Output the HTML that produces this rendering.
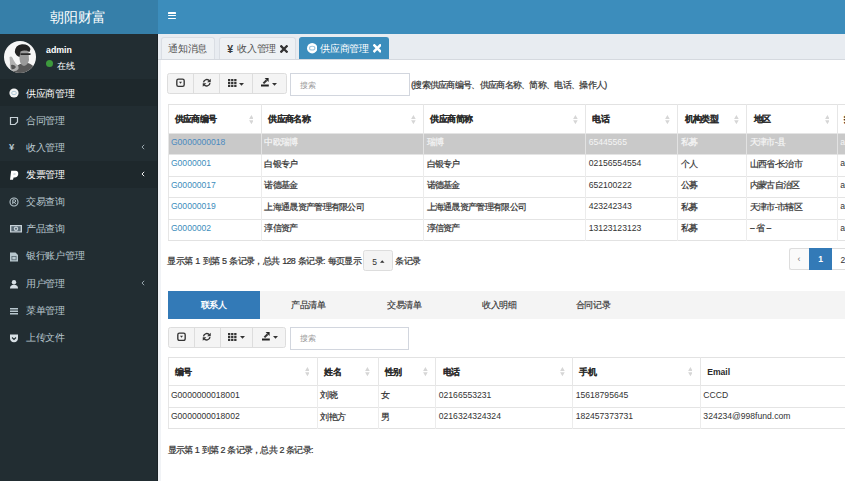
<!DOCTYPE html>
<html><head><meta charset="utf-8">
<style>
*{box-sizing:border-box;margin:0;padding:0}
html,body{width:845px;height:481px;overflow:hidden;background:#fff;font-family:"Liberation Sans",sans-serif;color:#333}
.a{position:absolute}
.t{position:absolute;white-space:nowrap;line-height:1}
#logo{left:0;top:0;width:158px;height:34px;background:#367fa9}
#nav{left:158px;top:0;width:687px;height:34px;background:#3c8dbc}
#side{left:0;top:34px;width:157.5px;height:447px;background:#222d32;border-right:1px solid #1a2226}
.mi{position:absolute;left:0;width:156.5px;height:27.1px}
.mi .tx{position:absolute;left:26px;top:9.6px;font-size:10px;letter-spacing:-.3px;line-height:1;color:#b8c7ce;white-space:nowrap}
.mi.on{background:#1e282c}
.mi.on .tx{color:#fff}
.mi .ic{position:absolute;left:9px;top:9.7px;width:10px;height:10px}
.mi .chev{position:absolute;left:140.5px;top:10.8px;width:4px;height:6px}
#tabbar{left:157.5px;top:34px;width:687.5px;height:26.3px;background:#e8ecf1;border-bottom:1.5px solid #d5d9df}
.tab{position:absolute;top:3.3px;height:21.5px;background:#eef1f4;border:1px solid #dadee4;border-bottom:none;border-radius:3px 3px 0 0;font-size:10px;letter-spacing:-.2px;color:#555}
.tab .tx{position:absolute;top:6px;white-space:nowrap;line-height:1}
.tab.on{background:#3c8dbc;border-color:#3c8dbc;color:#fff}
.bg{position:absolute;height:21.2px;background:#f4f4f4;border:1px solid #ddd;border-radius:2.5px}
.bg .d{position:absolute;top:0;width:1px;height:100%;background:#ddd}
.inp{position:absolute;height:23.3px;background:#fff;border:1px solid #d2d6de}
.inp .tx{position:absolute;left:9px;top:7.5px;font-size:8.24px;color:#999;line-height:1;white-space:nowrap}
table{position:absolute;border-collapse:collapse;table-layout:fixed;font-size:9px;letter-spacing:-.7px}
th{letter-spacing:-.6px}
td,th{white-space:nowrap;overflow:hidden;padding:0;text-align:left;vertical-align:middle;line-height:1}
th{-webkit-text-stroke:.05px currentColor;font-weight:bold;color:#2a2a2a;position:relative;border-left:1px solid #e6e6e6}
td{-webkit-text-stroke:.2px currentColor;border-left:1px solid #ececec;border-top:1px solid #e4e4e4;color:#333}
th:first-child,td:first-child{border-left:none}
th .in{padding-left:6.2px;padding-top:1.5px}
td .in{padding-left:2.4px;position:relative;top:-1px}
.n{font-size:8.6px;letter-spacing:0;-webkit-text-stroke:0}
th .n{letter-spacing:0}
td .in.n{top:-1.5px}
.srt{position:absolute;right:7.6px;top:50%;margin-top:-4.2px;width:4.8px;height:9.2px}
tr.sel td{background:#c9c9c9;color:#f5f5f5;border-left-color:#e2e2e2}
a{color:#3c8dbc;text-decoration:none}
tr.sel a{color:#4a8ac0}
</style></head><body>
<div id="logo" class="a"><div class="t" style="left:50px;top:11px;font-size:13.74px;color:#fff">朝阳财富</div></div>
<div id="nav" class="a">
  <div class="a" style="left:10px;top:12px;width:7.8px;height:1.7px;background:#fff;border-radius:.6px"></div>
  <div class="a" style="left:10px;top:14.8px;width:7.8px;height:1.7px;background:#fff;border-radius:.6px"></div>
  <div class="a" style="left:10px;top:17.6px;width:7.8px;height:1.7px;background:#fff;border-radius:.6px"></div>
</div>
<div id="side" class="a">
  <!-- avatar -->
  <svg class="a" style="left:4.3px;top:6.8px" width="32" height="32" viewBox="0 0 32 32">
    <defs><clipPath id="cc"><circle cx="16" cy="16" r="16"/></clipPath></defs>
    <circle cx="16" cy="16" r="16" fill="#f6f6f6"/>
    <g clip-path="url(#cc)">
      <path d="M24 22 Q30 24 33 30 L33 33 L8 33 Q10 26 16 23 Z" fill="#5a5a5a"/>
      <path d="M15.5 9 Q20 7.5 24.5 10 L25 19 Q24 24 20 25 Q16 24 15.5 18 Z" fill="#9a9a9a"/>
      <path d="M10.8 11 Q11 4 18 3.2 Q25 3 26.5 8 L25.5 11 Q21 8.5 16.5 10.5 L15.5 16 Q12 15 10.8 11 Z" fill="#222"/>
      <path d="M16.5 12.3 H26.5 V14 H16.5 Z" fill="#2a2a2a"/>
      <path d="M5.5 16 Q8 14 9.5 19 L12 23 Q15 24 14.5 28 Q12 31 8 30 Q5 27 6 22 Z" fill="#b0b0b0"/>
      <path d="M7 24 Q10 23 12 26 Q10 29 7.5 28 Z" fill="#555"/>
    </g>
  </svg>
  <div class="t" style="left:46px;top:12.3px;font-size:8.8px;font-weight:bold;color:#fff">admin</div>
  <div class="a" style="left:46.3px;top:26.3px;width:7px;height:7px;border-radius:50%;background:#3d9a3d"></div>
  <div class="t" style="left:57px;top:27.5px;font-size:9px;letter-spacing:-.3px;color:#fff">在线</div>

  <div class="mi on" style="top:45.3px"><svg class="ic" style="top:9px" viewBox="0 0 10 10"><circle cx="5" cy="5" r="4.6" fill="#f4f4f4"/><ellipse cx="5" cy="5" rx="2.4" ry="1.7" fill="none" stroke="#a9c4d4" stroke-width=".9"/></svg><div class="tx">供应商管理</div></div>
  <div class="mi" style="top:72.4px"><svg class="ic" style="top:9.2px" viewBox="0 0 10 10"><path d="M1.5 1.5 H8.5 V6 L6 8.5 H1.5 Z" fill="none" stroke="#c8d2d8" stroke-width="1.2"/></svg><div class="tx">合同管理</div></div>
  <div class="mi" style="top:99.5px"><div class="t" style="left:9px;top:8.5px;font-size:9.5px;color:#b8c7ce;font-weight:bold">¥</div><div class="tx">收入管理</div><svg class="chev" viewBox="0 0 5 7"><path d="M4 0.8 L1.2 3.5 L4 6.2" fill="none" stroke="#a9b6bd" stroke-width="1.1"/></svg></div>
  <div class="mi on" style="top:126.6px"><svg class="ic" style="top:9.5px" viewBox="0 0 10 10"><path d="M2.2 0.8 H6.6 Q9.6 1 9.2 4.4 Q8.6 7.4 5.6 7.4 H4.6 L4 9.8 H1 Z" fill="#fff"/><path d="M4.6 3 H6 Q6.9 3.1 6.7 4.2 Q6.5 5.1 5.6 5.1 H4.2 Z" fill="#d6dde2"/></svg><div class="tx">发票管理</div><svg class="chev" viewBox="0 0 5 7"><path d="M4 0.8 L1.2 3.5 L4 6.2" fill="none" stroke="#fff" stroke-width="1.2"/></svg></div>
  <div class="mi" style="top:153.7px"><svg class="ic" viewBox="0 0 10 10"><circle cx="5" cy="5" r="4" fill="none" stroke="#b8c7ce" stroke-width="1.1"/><path d="M3.8 7.2 V2.8 H5.5 Q6.7 2.8 6.7 4 Q6.7 5.2 5.5 5.2 H3.8 M5.3 5.2 L6.8 7.2" fill="none" stroke="#b8c7ce" stroke-width="1"/></svg><div class="tx">交易查询</div></div>
  <div class="mi" style="top:180.8px"><svg class="ic" style="left:9.8px;top:10.5px;width:12px;height:7.5px" viewBox="0 0 12 7.5"><rect x="0" y="0" width="12" height="7.5" fill="#c8d2d8"/><rect x="1.3" y="1.2" width="9.4" height="5.1" fill="#5a6a75"/><circle cx="6" cy="3.75" r="2.2" fill="#c8d2d8"/><circle cx="6" cy="3.75" r="1.1" fill="#5a6a75"/></svg><div class="tx">产品查询</div></div>
  <div class="mi" style="top:207.9px"><svg class="ic" viewBox="0 0 10 10"><path d="M1 0.5 H6.5 L9 3 V9.5 H1 Z" fill="#b8c7ce"/><path d="M2.5 4 H7.5 V8.2 H2.5 Z" fill="#55656f"/><path d="M3.3 4.8 H6.7 V7.4 H3.3 Z" fill="#b8c7ce"/></svg><div class="tx">银行账户管理</div></div>
  <div class="mi" style="top:235px"><svg class="ic" viewBox="0 0 10 10"><circle cx="5" cy="3.2" r="2.2" fill="#d8e0e5"/><path d="M1 9.5 Q1 5.8 5 5.8 Q9 5.8 9 9.5 Z" fill="#d8e0e5"/></svg><div class="tx">用户管理</div><svg class="chev" viewBox="0 0 5 7"><path d="M4 0.8 L1.2 3.5 L4 6.2" fill="none" stroke="#a9b6bd" stroke-width="1.1"/></svg></div>
  <div class="mi" style="top:262.1px"><svg class="ic" viewBox="0 0 10 10"><rect x="1" y="2" width="8" height="1.5" fill="#b8c7ce"/><rect x="1" y="4.5" width="8" height="1.5" fill="#b8c7ce"/><rect x="1" y="7" width="8" height="1.5" fill="#b8c7ce"/></svg><div class="tx">菜单管理</div></div>
  <div class="mi" style="top:289.2px"><svg class="ic" viewBox="0 0 10 10"><path d="M1 1.5 H9 V5 Q9 9 5 9.3 Q1 9 1 5 Z" fill="#d8e0e5"/><path d="M3 4.5 L5 6.5 L7 4.5" fill="none" stroke="#222d32" stroke-width="1.1"/></svg><div class="tx">上传文件</div></div>
</div>

<div id="tabbar" class="a">
  <div class="tab" style="left:3.2px;width:54.5px"><div class="tx" style="left:6.3px">通知消息</div></div>
  <div class="tab" style="left:61px;width:77px"><div class="tx" style="left:7.8px;top:5.4px;font-weight:bold;color:#3a3a3a;font-size:10.5px">¥</div><div class="tx" style="left:17.5px">收入管理</div><svg class="a" style="left:60.8px;top:6.3px" width="8" height="8" viewBox="0 0 8 8"><path d="M1.3 1.3 L6.7 6.7 M6.7 1.3 L1.3 6.7" stroke="#333" stroke-width="2.3" stroke-linecap="square"/></svg></div>
  <div class="tab on" style="left:141.3px;width:90.2px"><svg class="a" style="left:7.2px;top:5.1px" width="10.4" height="10.4" viewBox="0 0 10 10"><circle cx="5" cy="5" r="5" fill="#fff"/><ellipse cx="5" cy="5" rx="2.6" ry="1.8" fill="none" stroke="#9cc6e0" stroke-width="1"/></svg><div class="tx" style="left:20.3px;color:#fff">供应商管理</div><svg class="a" style="left:73.2px;top:6px" width="8.5" height="8.5" viewBox="0 0 8 8"><path d="M1.3 1.3 L6.7 6.7 M6.7 1.3 L1.3 6.7" stroke="#fff" stroke-width="2.4" stroke-linecap="square"/></svg></div>
</div>
<div class="a" style="left:157.5px;top:60px;width:3px;height:421px;background:#f1f3f6"></div>

<!-- toolbar 1 -->
<div class="bg" style="left:167.3px;top:73px;width:119.3px;height:20.8px">
  <div class="d" style="left:25.2px"></div><div class="d" style="left:51px"></div><div class="d" style="left:83.8px"></div>
  <svg class="a" style="left:8px;top:4.3px" width="9" height="9.5" viewBox="0 0 10 10"><rect x="0.9" y="0.9" width="8.2" height="8.2" rx="1.8" fill="none" stroke="#333" stroke-width="1.5"/><path d="M3.3 4 H6.7 L5 6 Z" fill="#333"/></svg>
  <svg class="a" style="left:33.7px;top:4.1px" width="9.5" height="9.5" viewBox="0 0 10 10"><path d="M1.6 4.6 A3.5 3.5 0 0 1 7.9 3.1" fill="none" stroke="#333" stroke-width="1.5"/><path d="M9.2 0.8 V4.6 H5.4 Z" fill="#333"/><path d="M8.4 5.4 A3.5 3.5 0 0 1 2.1 6.9" fill="none" stroke="#333" stroke-width="1.5"/><path d="M0.8 9.2 V5.4 H4.6 Z" fill="#333"/></svg>
  <svg class="a" style="left:59.8px;top:5.3px" width="8.5" height="8" viewBox="0 0 8.5 8"><g fill="#333"><rect x="0" y="0" width="2.3" height="2.2"/><rect x="3.1" y="0" width="2.3" height="2.2"/><rect x="6.2" y="0" width="2.3" height="2.2"/><rect x="0" y="2.9" width="2.3" height="2.2"/><rect x="3.1" y="2.9" width="2.3" height="2.2"/><rect x="6.2" y="2.9" width="2.3" height="2.2"/><rect x="0" y="5.8" width="2.3" height="2.2"/><rect x="3.1" y="5.8" width="2.3" height="2.2"/><rect x="6.2" y="5.8" width="2.3" height="2.2"/></g></svg>
  <svg class="a" style="left:71px;top:8.8px" width="5" height="3" viewBox="0 0 5 3"><path d="M0 0 H5 L2.5 2.8 Z" fill="#333"/></svg>
  <svg class="a" style="left:93px;top:4.3px" width="8.5" height="9" viewBox="0 0 8.5 9"><rect x="0" y="6.5" width="7.8" height="2" fill="#222"/><path d="M2.4 5.4 L5.6 2.2" stroke="#333" stroke-width="2"/><path d="M3.6 0 H7.6 V4 Z" fill="#222"/></svg>
  <svg class="a" style="left:104.2px;top:8.6px" width="5" height="3" viewBox="0 0 5 3"><path d="M0 0 H5 L2.5 2.8 Z" fill="#333"/></svg>
</div>
<div class="inp" style="left:290px;top:73px;width:120px"><div class="tx">搜索</div></div>
<div class="t" style="left:411px;top:81px;font-size:9px;letter-spacing:-.7px;-webkit-text-stroke:.2px #333;color:#333">(搜索供应商编号、供应商名称、简称、电话、操作人)</div>

<!-- table 1 -->
<table style="left:167.5px;top:104px;width:720px;border-top:1px solid #e2e2e2;border-left:1px solid #e6e6e6">
  <colgroup><col style="width:93.5px"><col style="width:162px"><col style="width:162px"><col style="width:92px"><col style="width:69px"><col style="width:90.5px"><col style="width:50px"></colgroup>
  <tr style="height:28.5px"><th><div class="in">供应商编号</div><svg class="srt" viewBox="0 0 5 10"><path d="M2.5 0 L5 4.3 H0 Z M2.5 10 L5 5.7 H0 Z" fill="#d6d6d6"/></svg></th><th><div class="in">供应商名称</div><svg class="srt" viewBox="0 0 5 10"><path d="M2.5 0 L5 4.3 H0 Z M2.5 10 L5 5.7 H0 Z" fill="#d6d6d6"/></svg></th><th><div class="in">供应商简称</div><svg class="srt" viewBox="0 0 5 10"><path d="M2.5 0 L5 4.3 H0 Z M2.5 10 L5 5.7 H0 Z" fill="#d6d6d6"/></svg></th><th><div class="in">电话</div><svg class="srt" viewBox="0 0 5 10"><path d="M2.5 0 L5 4.3 H0 Z M2.5 10 L5 5.7 H0 Z" fill="#d6d6d6"/></svg></th><th><div class="in">机构类型</div><svg class="srt" viewBox="0 0 5 10"><path d="M2.5 0 L5 4.3 H0 Z M2.5 10 L5 5.7 H0 Z" fill="#d6d6d6"/></svg></th><th><div class="in">地区</div><svg class="srt" viewBox="0 0 5 10"><path d="M2.5 0 L5 4.3 H0 Z M2.5 10 L5 5.7 H0 Z" fill="#d6d6d6"/></svg></th><th><div class="in">操作人</div></th></tr>
  <tr class="sel" style="height:21.5px"><td><div class="in n"><a>G0000000018</a></div></td><td><div class="in">中欧瑞博</div></td><td><div class="in">瑞博</div></td><td><div class="in n">65445565</div></td><td><div class="in">私募</div></td><td><div class="in">天津市-县</div></td><td><div class="in n">admin</div></td></tr>
  <tr style="height:21.5px"><td><div class="in n"><a>G0000001</a></div></td><td><div class="in">白银专户</div></td><td><div class="in">白银专户</div></td><td><div class="in n">02156554554</div></td><td><div class="in">个人</div></td><td><div class="in">山西省-长治市</div></td><td><div class="in n">admin</div></td></tr>
  <tr style="height:21.5px"><td><div class="in n"><a>G00000017</a></div></td><td><div class="in">诺德基金</div></td><td><div class="in">诺德基金</div></td><td><div class="in n">652100222</div></td><td><div class="in">公募</div></td><td><div class="in">内蒙古自治区</div></td><td><div class="in n">admin</div></td></tr>
  <tr style="height:21.5px"><td><div class="in n"><a>G00000019</a></div></td><td><div class="in">上海通晟资产管理有限公司</div></td><td><div class="in">上海通晟资产管理有限公司</div></td><td><div class="in n">423242343</div></td><td><div class="in">私募</div></td><td><div class="in">天津市-市辖区</div></td><td><div class="in n">admin</div></td></tr>
  <tr style="height:21.5px;border-bottom:1px solid #e2e2e2"><td><div class="in n"><a>G0000002</a></div></td><td><div class="in">淳信资产</div></td><td><div class="in">淳信资产</div></td><td><div class="in n">13123123123</div></td><td><div class="in">私募</div></td><td><div class="in">-- 省 --</div></td><td><div class="in n">admin</div></td></tr>
</table>

<!-- pagination 1 -->
<div class="t" style="left:167.3px;top:256.5px;font-size:9px;letter-spacing:-.7px;-webkit-text-stroke:.2px #333;word-spacing:1.2px;color:#333">显示第 1 到第 5 条记录，总共 128 条记录: 每页显示</div>
<div class="a" style="left:362.8px;top:250px;width:30.2px;height:20.8px;background:#f4f4f4;border:1px solid #ddd;border-radius:2.5px"><div class="t" style="left:8.5px;top:6.5px;font-size:8.5px;color:#333">5</div><svg class="a" style="left:16.5px;top:9.3px" width="4.5" height="3" viewBox="0 0 5 3"><path d="M0 3 H5 L2.5 0 Z" fill="#333"/></svg></div>
<div class="t" style="left:395.3px;top:256.5px;font-size:9px;letter-spacing:-.7px;-webkit-text-stroke:.2px #333;color:#333">条记录</div>
<div class="a" style="left:789.4px;top:248.3px;width:20px;height:21.3px;background:#fafafa;border:1px solid #ddd;border-right:none;border-radius:2.5px 0 0 2.5px"><div class="t" style="left:7px;top:6px;font-size:9px;color:#777">‹</div></div>
<div class="a" style="left:809.2px;top:248.3px;width:22.8px;height:21.3px;background:#337ab7"><div class="t" style="left:9px;top:6.3px;font-size:8.6px;color:#fff;font-weight:bold">1</div></div>
<div class="a" style="left:832px;top:248.3px;width:30px;height:21.3px;background:#fff;border:1px solid #ddd;border-left:none"><div class="t" style="left:8.5px;top:6.3px;font-size:8.6px;color:#333">2</div></div>

<!-- bottom tabs -->
<div class="a" style="left:167.6px;top:290.6px;width:677.4px;height:28px;background:#f4f4f4"></div>
<div class="a" style="left:167.6px;top:290.6px;width:92.9px;height:28px;background:#337ab7"></div>
<div class="t" style="left:200.8px;top:301.3px;font-size:9px;letter-spacing:-.3px;color:#fff;font-weight:bold">联系人</div>
<div class="t" style="left:291.3px;top:301.3px;font-size:9px;letter-spacing:-.45px;-webkit-text-stroke:.15px #333;color:#333">产品清单</div>
<div class="t" style="left:387.2px;top:301.3px;font-size:9px;letter-spacing:-.45px;-webkit-text-stroke:.15px #333;color:#333">交易清单</div>
<div class="t" style="left:482.2px;top:301.3px;font-size:9px;letter-spacing:-.45px;-webkit-text-stroke:.15px #333;color:#333">收入明细</div>
<div class="t" style="left:575.9px;top:301.3px;font-size:9px;letter-spacing:-.45px;-webkit-text-stroke:.15px #333;color:#333">合同记录</div>

<!-- toolbar 2 -->
<div class="bg" style="left:167.5px;top:326.6px;width:118.8px;height:21px">
  <div class="d" style="left:25.2px"></div><div class="d" style="left:51px"></div><div class="d" style="left:83.8px"></div>
  <svg class="a" style="left:8px;top:4.3px" width="9" height="9.5" viewBox="0 0 10 10"><rect x="0.9" y="0.9" width="8.2" height="8.2" rx="1.8" fill="none" stroke="#333" stroke-width="1.5"/><path d="M3.3 4 H6.7 L5 6 Z" fill="#333"/></svg>
  <svg class="a" style="left:33.7px;top:4.1px" width="9.5" height="9.5" viewBox="0 0 10 10"><path d="M1.6 4.6 A3.5 3.5 0 0 1 7.9 3.1" fill="none" stroke="#333" stroke-width="1.5"/><path d="M9.2 0.8 V4.6 H5.4 Z" fill="#333"/><path d="M8.4 5.4 A3.5 3.5 0 0 1 2.1 6.9" fill="none" stroke="#333" stroke-width="1.5"/><path d="M0.8 9.2 V5.4 H4.6 Z" fill="#333"/></svg>
  <svg class="a" style="left:59.8px;top:5.3px" width="8.5" height="8" viewBox="0 0 8.5 8"><g fill="#333"><rect x="0" y="0" width="2.3" height="2.2"/><rect x="3.1" y="0" width="2.3" height="2.2"/><rect x="6.2" y="0" width="2.3" height="2.2"/><rect x="0" y="2.9" width="2.3" height="2.2"/><rect x="3.1" y="2.9" width="2.3" height="2.2"/><rect x="6.2" y="2.9" width="2.3" height="2.2"/><rect x="0" y="5.8" width="2.3" height="2.2"/><rect x="3.1" y="5.8" width="2.3" height="2.2"/><rect x="6.2" y="5.8" width="2.3" height="2.2"/></g></svg>
  <svg class="a" style="left:71px;top:8.8px" width="5" height="3" viewBox="0 0 5 3"><path d="M0 0 H5 L2.5 2.8 Z" fill="#333"/></svg>
  <svg class="a" style="left:93px;top:4.3px" width="8.5" height="9" viewBox="0 0 8.5 9"><rect x="0" y="6.5" width="7.8" height="2" fill="#222"/><path d="M2.4 5.4 L5.6 2.2" stroke="#333" stroke-width="2"/><path d="M3.6 0 H7.6 V4 Z" fill="#222"/></svg>
  <svg class="a" style="left:104.2px;top:8.6px" width="5" height="3" viewBox="0 0 5 3"><path d="M0 0 H5 L2.5 2.8 Z" fill="#333"/></svg>
</div>
<div class="inp" style="left:290.2px;top:326.6px;width:119px"><div class="tx">搜索</div></div>

<!-- table 2 -->
<table style="left:167.5px;top:357px;width:720px;border-top:1px solid #e2e2e2;border-left:1px solid #e6e6e6">
  <colgroup><col style="width:149.5px"><col style="width:60.8px"><col style="width:57.6px"><col style="width:136.9px"><col style="width:127.7px"><col style="width:187.5px"></colgroup>
  <tr style="height:28.2px"><th><div class="in">编号</div><svg class="srt" viewBox="0 0 5 10"><path d="M2.5 0 L5 4.3 H0 Z M2.5 10 L5 5.7 H0 Z" fill="#d6d6d6"/></svg></th><th><div class="in">姓名</div><svg class="srt" viewBox="0 0 5 10"><path d="M2.5 0 L5 4.3 H0 Z M2.5 10 L5 5.7 H0 Z" fill="#d6d6d6"/></svg></th><th><div class="in">性别</div><svg class="srt" viewBox="0 0 5 10"><path d="M2.5 0 L5 4.3 H0 Z M2.5 10 L5 5.7 H0 Z" fill="#d6d6d6"/></svg></th><th><div class="in">电话</div><svg class="srt" viewBox="0 0 5 10"><path d="M2.5 0 L5 4.3 H0 Z M2.5 10 L5 5.7 H0 Z" fill="#d6d6d6"/></svg></th><th><div class="in">手机</div><svg class="srt" viewBox="0 0 5 10"><path d="M2.5 0 L5 4.3 H0 Z M2.5 10 L5 5.7 H0 Z" fill="#d6d6d6"/></svg></th><th><div class="in n">Email</div></th></tr>
  <tr style="height:21.6px"><td><div class="in n">G0000000018001</div></td><td><div class="in">刘晓</div></td><td><div class="in">女</div></td><td><div class="in n">02166553231</div></td><td><div class="in n">15618795645</div></td><td><div class="in n">CCCD</div></td></tr>
  <tr style="height:21.6px;border-bottom:1px solid #e2e2e2"><td><div class="in n">G0000000018002</div></td><td><div class="in">刘艳方</div></td><td><div class="in">男</div></td><td><div class="in n">0216324324324</div></td><td><div class="in n">182457373731</div></td><td><div class="in n">324234@998fund.com</div></td></tr>
</table>
<div class="t" style="left:167.5px;top:445.6px;font-size:9px;letter-spacing:-.7px;-webkit-text-stroke:.2px #333;word-spacing:.6px;color:#333">显示第 1 到第 2 条记录，总共 2 条记录:</div>
</body></html>
